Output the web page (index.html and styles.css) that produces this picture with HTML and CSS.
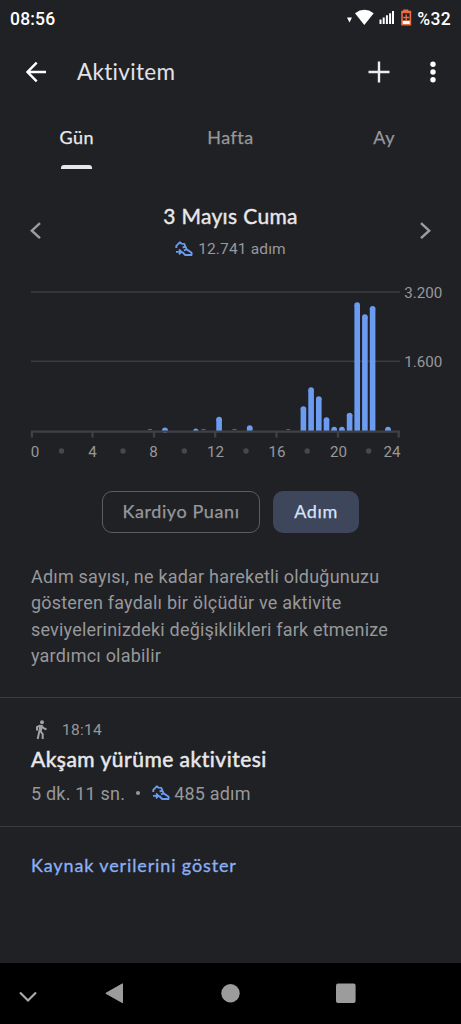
FILE: index.html
```
<!DOCTYPE html>
<html lang="tr">
<head>
<meta charset="utf-8">
<title>Aktivitem</title>
<link rel="stylesheet" href="styles.css">
</head>
<body>
<svg class="defs" width="0" height="0" aria-hidden="true">
  <symbol id="shoe" viewBox="0 0 18 16">
    <path d="M1.300 7V4.800L4.800 1.300L6.600 2.700L9.300 2.800L10.300 5.500L11.900 8.600L16 11.200Q17.200 12.300 16.400 14H10.200L7.300 11M7.600 6.500L10.300 5.700M9 9.300L11.700 8.400M1 10.900H6.200M4 8.400L6.500 10.900L4 13.400" fill="none" stroke="currentColor" stroke-width="1.850" stroke-linejoin="round"/>
  </symbol>
</svg>
<div class="screen">
  <header class="status">
    <span class="clock">08:56</span>
    <div class="status-right">
      <svg width="66" height="20" viewBox="0 0 66 20">
        <path d="M0 8.500H5L2.500 13.500Z" fill="#fff"/>
        <path d="M8 4.200Q17.300-2.600 26.700 4.200L17.300 16Z" fill="#fff"/>
        <path d="M32.500 10.500H34.500V15H32.500ZM35.700 8.600H37.700V15H35.700ZM38.900 6.300H40.900V15H38.900ZM42.100 4.200H44.100V15H42.100ZM45 2.100H47V15H45Z" fill="#fff"/>
        <path d="M56.200 1.800V0.600H61.300V1.800H64.200V16.400H54.200V1.800Z" fill="#ed6c43"/>
        <path d="M55.800 4.200H62.600V11.500H55.800Z" fill="#202124"/>
        <path d="M59.200 5.500V11.500M56.200 8.500H62.200" stroke="#ed6c43" stroke-width="1.400"/>
        <path d="M55.800 11.800H62.600V15H55.800Z" fill="#fff"/>
      </svg>
      <span class="percent">%32</span>
    </div>
  </header>
  <div class="appbar">
    <svg width="22" height="22" viewBox="0 0 22 22"><path d="M20 11H2M10.700 1.700L1.500 11L10.700 20.300" fill="none" stroke="#fff" stroke-width="2.400"/></svg>
    <h1>Aktivitem</h1>
    <svg class="plus" width="22" height="22" viewBox="0 0 22 22"><path d="M11 .5V21.500M.5 11H21.500" stroke="#eeeef2" stroke-width="2.400"/></svg>
    <svg width="6" height="22" viewBox="0 0 6 22" fill="#fff"><circle cx="3" cy="3.200" r="2.700"/><circle cx="3" cy="11" r="2.700"/><circle cx="3" cy="18.700" r="2.700"/></svg>
  </div>
  <nav class="tabs">
    <div class="tab active"><span>Gün</span></div>
    <div class="tab"><span>Hafta</span></div>
    <div class="tab"><span>Ay</span></div>
  </nav>
  <section class="day">
    <svg width="12" height="18" viewBox="0 0 12 18"><path d="M10 1.200L1.800 8.700L10 16.200" fill="none" stroke="#9b9ca0" stroke-width="2.500"/></svg>
    <div class="day-text">
      <h2>3 Mayıs Cuma</h2>
      <p><svg class="shoe" width="18" height="16"><use href="#shoe"/></svg><span>12.741 adım</span></p>
    </div>
    <svg width="12" height="18" viewBox="0 0 12 18"><path d="M2 1.200L10.200 8.700L2 16.200" fill="none" stroke="#9b9ca0" stroke-width="2.500"/></svg>
  </section>
  <svg class="chart" width="461" height="190" viewBox="0 280 461 190">
    <path d="M31 292H400M31 361.300H400" stroke="#3b3c40" stroke-width="1.500"/>
    <g stroke="#6b9cf2" stroke-width="5.600">
      <path d="M165 431V429.500M219.100 431V419M249.700 431V427.500M303.400 431V408.500M311.100 431V390M318.800 431V398.500M326.500 431V420M334.200 431V429M341.900 431V429M349.600 431V415M357.200 431V305M364.900 431V317M372.600 431V308.500M388 431V429"/>
    </g>
    <g fill="#6b9cf2">
      <circle cx="165" cy="430.200" r="2.800"/><circle cx="195.800" cy="431" r="2.600"/><circle cx="219.100" cy="419.500" r="2.800"/><circle cx="249.700" cy="428" r="2.800"/><circle cx="303.400" cy="409" r="2.800"/><circle cx="311.100" cy="390" r="2.800"/><circle cx="318.800" cy="399" r="2.800"/><circle cx="326.500" cy="420" r="2.800"/><circle cx="334.200" cy="429.500" r="2.800"/><circle cx="341.900" cy="429.500" r="2.800"/><circle cx="349.600" cy="415.500" r="2.800"/><circle cx="357.200" cy="305" r="2.800"/><circle cx="364.900" cy="317" r="2.800"/><circle cx="372.600" cy="308.700" r="2.800"/><circle cx="388" cy="429.500" r="2.800"/>
    </g>
    <path d="M148 429.500H152M201.500 429.500H205.500M232.500 429.500H236.500M286.500 429.500H290" stroke="#606676"/>
    <path d="M193 432V434H198.500V432" fill="#202124"/>
    <path d="M31 431.700H400M31.900 431V437.500M92.500 431V437.500M154 431V437.500M215.200 431V437.500M276.500 431V437.500M338 431V437.500M398.700 431V437.500" stroke="#404145" stroke-width="2.300" fill="none"/>
    <g fill="#47484b"><circle cx="61.500" cy="451" r="2.700"/><circle cx="123" cy="451" r="2.700"/><circle cx="184.300" cy="451" r="2.700"/><circle cx="246" cy="451" r="2.700"/><circle cx="307.200" cy="451" r="2.700"/><circle cx="368.700" cy="451" r="2.700"/></g>
    <g class="labels">
      <text x="35" y="456.500">0</text><text x="92.500" y="456.500">4</text><text x="153.500" y="456.500">8</text><text x="215.500" y="456.500">12</text><text x="277" y="456.500">16</text><text x="338.500" y="456.500">20</text><text x="392" y="456.500">24</text>
      <text x="423.300" y="297.500">3.200</text><text x="423.300" y="366.800">1.600</text>
    </g>
  </svg>
  <div class="chips">
    <div class="chip cardio"><span>Kardiyo Puanı</span></div>
    <div class="chip steps"><span>Adım</span></div>
  </div>
  <p class="description"><span>Adım sayısı, ne kadar hareketli olduğunuzu</span><br><span>gösteren faydalı bir ölçüdür ve aktivite</span><br><span>seviyelerinizdeki değişiklikleri fark etmenize</span><br><span>yardımcı olabilir</span></p>
  <section class="activity">
    <div class="time">
      <svg width="18" height="20" viewBox="0 0 18 20" fill="none" stroke="#a0a1a4"><circle cx="11" cy="2.300" r="2" fill="#a0a1a4" stroke="none"/><path d="M10 5L9 12" stroke-width="3.400"/><path d="M9 5.500L6 7.200V10.500M10.500 5.700Q11.700 8.800 15.500 9.200M8.400 11L6.700 19M9.400 11.200L11.700 14V19" stroke-width="2"/></svg>
      <span>18:14</span>
    </div>
    <h3><span>Akşam yürüme aktivitesi</span></h3>
    <p class="meta"><span>5 dk. 11 sn.</span><i class="bullet"></i><svg class="shoe" width="18" height="16"><use href="#shoe"/></svg><span>485 adım</span></p>
  </section>
  <div class="source"><span>Kaynak verilerini göster</span></div>
  <footer class="navbar">
    <svg width="461" height="61" viewBox="0 963 461 61">
      <path d="M20 992.500L28 1000.500L36 992.500" fill="none" stroke="#aaa" stroke-width="2.200"/>
      <path d="M105.800 993.300L122.500 983.800V1002.700Z" fill="#9c9c9c" stroke="#9c9c9c" stroke-linejoin="round"/>
      <circle cx="230.500" cy="993.200" r="9.200" fill="#9c9c9c"/>
      <rect x="336" y="983.500" width="19.600" height="19.500" rx="2" fill="#9c9c9c"/>
    </svg>
  </footer>
</div>
</body>
</html>
```
FILE: styles.css
```
* { box-sizing: border-box; }
body { margin: 0; background: #202124; }
h1, h2, h3, p { margin: 0; font-weight: 400; }
svg { display: block; flex: none; }
.defs { position: absolute; }
.screen {
  width: 461px;
  height: 1024px;
  display: flex;
  flex-direction: column;
  background: #202124;
  color: #97989b;
  font-family: Roboto, sans-serif;
  white-space: nowrap;
  overflow: hidden;
}
.status {
  height: 38px;
  padding: 0 10px;
  display: flex;
  align-items: center;
  justify-content: space-between;
  color: #fff;
  font-size: 17.500px;
  font-weight: 500;
}
.clock { letter-spacing: .2px; }
.status-right { display: flex; align-items: center; gap: 4px; }
.percent { letter-spacing: .3px; }
.appbar {
  height: 68px;
  padding: 0 25px 0 26px;
  display: flex;
  align-items: center;
  color: #e3e3e6;
}
.appbar h1 {
  margin-left: 29px;
  padding-bottom: 2px;
  font: 400 22.500px Lato, sans-serif;
  letter-spacing: .3px;
}
.plus { margin-left: auto; margin-right: 40px; }
.tabs { display: grid; grid-template-columns: repeat(3, 1fr); height: 64px; }
.tab {
  display: flex;
  flex-direction: column;
  align-items: center;
  padding-top: 20px;
  font: 400 18px/22px Lato, sans-serif;
  letter-spacing: .5px;
  -webkit-text-stroke: .25px;
}
.active { color: #e8e8eb; }
.active::after {
  content: "";
  width: 31px;
  height: 4px;
  margin-top: 17px;
  border-radius: 3px 3px 0 0;
  background: #e8e8eb;
}
.day {
  height: 110px;
  padding: 11px 30px 0;
  display: flex;
  align-items: center;
  justify-content: space-between;
}
.day-text { display: flex; flex-direction: column; align-items: center; gap: 8px; padding-top: 3px; }
.day h2 {
  font: 400 21px/26px Lato, sans-serif;
  letter-spacing: .35px;
  color: #e8e8eb;
  -webkit-text-stroke: .4px;
}
.day p { display: flex; align-items: center; gap: 5px; font-size: 15.500px; line-height: 24px; letter-spacing: .15px; }
.shoe { color: #6b9cf2; }
.chart { height: 190px; }
.labels { font: 15.200px Roboto, sans-serif; fill: #97989b; text-anchor: middle; }
.chips { height: 84px; padding: 21px 0 0 102px; display: flex; gap: 13px; }
.chip {
  height: 42px;
  display: flex;
  align-items: center;
  justify-content: center;
  padding-bottom: 2px;
  border-radius: 10px;
  font: 400 18px Lato, sans-serif;
  letter-spacing: .6px;
  -webkit-text-stroke: .25px;
}
.cardio { width: 158px; border: 1.500px solid #5c5d61; }
.steps { width: 86px; background: #3d465b; color: #d8e2fa; }
.description {
  height: 143px;
  padding: 10px 31px 0;
  font-size: 18px;
  line-height: 26.300px;
  letter-spacing: .2px;
}
.activity {
  height: 130px;
  padding: 21px 31px 0;
  border-top: 1.500px solid #3b3c40;
  border-bottom: 1.500px solid #3b3c40;
}
.time { height: 22px; display: flex; align-items: center; gap: 13px; font-size: 15.500px; letter-spacing: .3px; }
.activity h3 {
  margin-top: 5px;
  font: 400 21px/26px Lato, sans-serif;
  letter-spacing: .5px;
  color: #e8e8eb;
  -webkit-text-stroke: .5px;
}
.meta { margin-top: 9px; height: 24px; display: flex; align-items: center; font-size: 18px; letter-spacing: .2px; }
.bullet { width: 4px; height: 4px; margin: 0 12px 0 11px; border-radius: 50%; background: #97989b; }
.meta .shoe { margin-right: 4px; }
.source {
  height: 136px;
  padding: 26px 31px 0;
  font: 400 18px/24px Lato, sans-serif;
  letter-spacing: .87px;
  color: #8ab0f5;
  -webkit-text-stroke: .3px;
}
.navbar { height: 61px; background: #000; }
```
